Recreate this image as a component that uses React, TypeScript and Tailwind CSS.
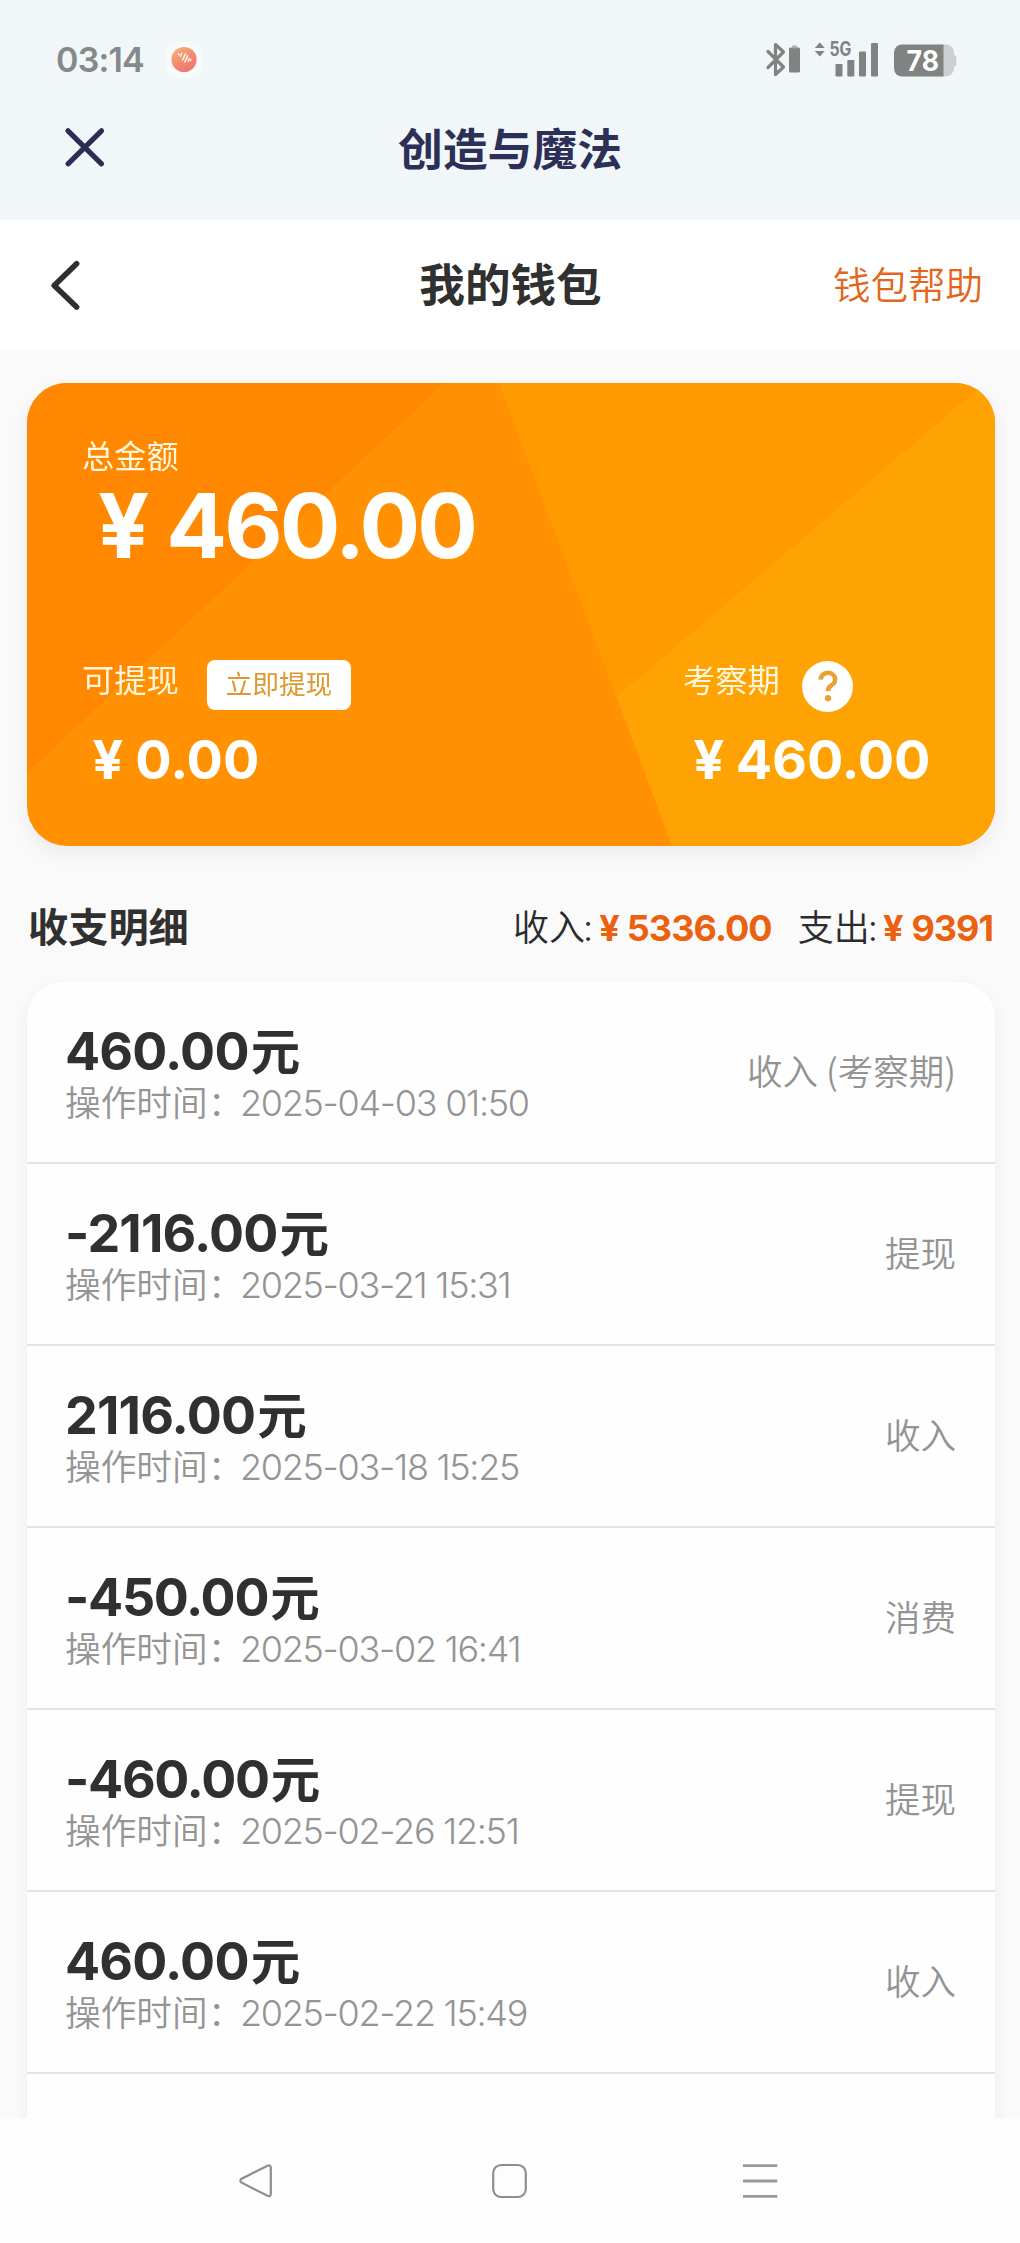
import type { ReactNode } from "react";

type Entry = { amount: string; time: string; kind: string; tight?: boolean };

const entries: Entry[] = [
  { amount: "460.00", time: "2025-04-03 01:50", kind: "收入 (考察期)" },
  { amount: "-2116.00", time: "2025-03-21 15:31", kind: "提现" },
  { amount: "2116.00", time: "2025-03-18 15:25", kind: "收入" },
  { amount: "-450.00", time: "2025-03-02 16:41", kind: "消费", tight: true },
  { amount: "-460.00", time: "2025-02-26 12:51", kind: "提现", tight: true },
  { amount: "460.00", time: "2025-02-22 15:49", kind: "收入" },
];

function Cjk({ className = "", children }: { className?: string; children: ReactNode }) {
  return (
    <span className={`block leading-none whitespace-nowrap font-['Noto_Sans_CJK_SC',sans-serif] ${className}`}>
      {children}
    </span>
  );
}

function StatusBar() {
  return (
    <div className="flex h-[100px] items-start pl-14 pr-[62px]">
      <span className="mt-[42.5px] text-[34px] leading-none font-semibold tracking-[-0.8px] text-[#858989]">03:14</span>
      <svg className="mt-[42px] ml-[22px] shrink-0" width="36" height="36" viewBox="0 0 36 36">
        <defs>
          <linearGradient id="orb" x1="0.1" y1="0.1" x2="0.7" y2="1">
            <stop offset="0" stopColor="#eeb47c" />
            <stop offset="0.5" stopColor="#f28c6c" />
            <stop offset="1" stopColor="#f27474" />
          </linearGradient>
        </defs>
        <rect width="36" height="36" rx="8" fill="#f7fafb" />
        <circle cx="18" cy="17.5" r="12.6" fill="url(#orb)" />
        <g stroke="#fff3e8" strokeLinecap="round">
          <path d="M12.4 11.8l.8 1.4M15.6 11.2l-1 3.2M24.8 17.4l-.4 1.2" strokeWidth="1.5" />
          <path d="M19.4 12l-2.8 6M21.6 13.8l-2.8 6.2M23.2 16.6l-1 2.6" strokeWidth="1.6" />
        </g>
      </svg>
      <svg className="mt-9 ml-auto shrink-0" width="194" height="48" viewBox="764 36 194 48" fill="#7f8382">
        <path d="M768 51.5L783.5 67L775.5 74.5V44.5L783.5 52L768 67.5" fill="none" stroke="#7f8382" strokeWidth="3.2" strokeLinejoin="round" strokeLinecap="round" />
        <rect x="789" y="47.5" width="11" height="25" rx="1.5" />
        <rect x="792" y="45.5" width="5" height="3" rx="1" fill="#a9adad" />
        <path d="M819.8 42.5l5 5.5h-10zM819.8 56.5l5-5.5h-10z" />
        <text x="829.5" y="56.3" fontSize="19.5" fontWeight="700" textLength="22" lengthAdjust="spacingAndGlyphs" fontFamily="Inter, sans-serif">5G</text>
        <rect x="835.5" y="64" width="7" height="12.5" rx="1" />
        <rect x="847.3" y="60" width="7" height="16.5" rx="1" />
        <rect x="859" y="51.5" width="7" height="25" rx="1" />
        <rect x="871" y="43" width="7" height="33.5" rx="1" />
        <path d="M943 44.5h3a8 8 0 0 1 8 8v2.8h.8a1.5 1.5 0 0 1 1.5 1.5v8a1.5 1.5 0 0 1-1.5 1.5h-.8v2a8 8 0 0 1-8 8h-3z" fill="#cccfd1" />
        <path d="M902 44.5h41.5v32H902a8 8 0 0 1-8-8v-16a8 8 0 0 1 8-8z" />
        <text x="906.5" y="71.3" fontSize="28.5" fontWeight="700" textLength="32.5" lengthAdjust="spacingAndGlyphs" fontFamily="Inter, sans-serif" fill="#ffffff">78</text>
      </svg>
    </div>
  );
}

function Header() {
  return (
    <header className="h-[220px] bg-[#f1f6f9]">
      <StatusBar />
      <div className="grid grid-cols-3 items-start">
        <svg className="mt-[26px] ml-[62px]" width="45" height="42" viewBox="0 0 45 42">
          <path d="M6 4.8l33.5 33M39.5 4.8L6 37.8" stroke="#2c2d54" strokeWidth="5.2" strokeLinecap="round" />
        </svg>
        <Cjk className="mt-[25px] text-center text-[44.8px] font-bold text-[#2c2f56]">创造与魔法</Cjk>
      </div>
    </header>
  );
}

function TitleBar() {
  return (
    <div className="grid h-[131px] grid-cols-3 items-start bg-white">
      <svg className="mt-[38px] ml-[46px]" width="40" height="56" viewBox="46 258 40 56">
        <path d="M76.6 263.8L54.2 285.5L76.6 307" fill="none" stroke="#2f2f2f" strokeWidth="5.6" strokeLinecap="round" strokeLinejoin="round" />
      </svg>
      <Cjk className="mt-10 ml-[1px] text-center text-[45.6px] font-bold text-[#303030]">我的钱包</Cjk>
      <Cjk className="mt-[44px] mr-[37px] text-right text-[37.5px] font-[350] text-[#e2661c]">钱包帮助</Cjk>
    </div>
  );
}

function BalanceCard() {
  return (
    <section className="relative ml-[27px] mt-8 h-[463px] w-[968px] overflow-hidden rounded-[40px] bg-[#ff9102]">
      <svg className="absolute inset-0" width="968" height="463" viewBox="-1 0 968 463">
        <path d="M-1 0H416L-1 390Z" fill="#ff8800" />
        <path d="M471 0H967V463H644Z" fill="#ff9b00" />
        <path d="M589 314L957 0H967V463H644Z" fill="#ffa304" />
      </svg>
      <div className="relative pt-[54.5px] pl-[55px]">
        <Cjk className="text-[32.3px] text-[#fff6dc]">总金额</Cjk>
        <div className="mt-[11.5px] ml-4 flex gap-[17px] text-[90px] leading-none font-bold text-white">
          <span>¥</span>
          <span className="tracking-[-2.9px]">460.00</span>
        </div>
        <div className="mt-[89px] flex">
          <div className="w-[601px]">
            <div className="flex h-[50px] items-start">
              <Cjk className="mt-[2px] text-[32.3px] text-[#fff6dc]">可提现</Cjk>
              <button className="ml-7 flex h-[50px] w-36 items-center justify-center rounded-lg bg-white pb-1">
                <Cjk className="text-[26.7px] text-[#dd9831]">立即提现</Cjk>
              </button>
            </div>
            <div className="mt-[23px] ml-[10.5px] flex gap-3 text-[54px] leading-none font-bold text-white">
              <span>¥</span>
              <span>0.00</span>
            </div>
          </div>
          <div>
            <div className="flex h-[50px] items-start">
              <Cjk className="mt-[2px] text-[32.3px] text-[#fff6dc]">考察期</Cjk>
              <svg className="mt-[0.5px] ml-[22px]" width="51" height="51" viewBox="0 0 51 51">
                <circle cx="25.5" cy="25.5" r="25.5" fill="#fff" />
                <path d="M18.8 18.6a7.2 6.6 0 1 1 10.6 5.6c-2.4 1.4-3.4 2.6-3.4 6" fill="none" stroke="#e9a035" strokeWidth="4.6" />
                <circle cx="26" cy="37.2" r="3.1" fill="#e9a035" />
              </svg>
            </div>
            <div className="mt-[23px] ml-[10.5px] flex gap-[11.5px] text-[54px] leading-none font-bold text-white">
              <span>¥</span>
              <span className="tracking-[-0.2px]">460.00</span>
            </div>
          </div>
        </div>
      </div>
    </section>
  );
}

function Summary() {
  return (
    <div className="flex h-[136px] items-start pr-[27px] pl-7">
      <Cjk className="mt-[59px] text-[40.2px] font-bold text-[#303030]">收支明细</Cjk>
      <div className="mt-[61px] ml-auto flex items-baseline text-[36px] leading-none text-[#2b2b2b]">
        <Cjk className="font-[350]">收入</Cjk>
        <span className="ml-[-2px] font-light">:</span>
        <span className="ml-[6px] font-bold text-[#eb610f]">¥</span>
        <span className="ml-[7px] font-bold tracking-[-0.9px] text-[#eb610f]">5336.00</span>
        <Cjk className="ml-[26px] font-[350]">支出</Cjk>
        <span className="ml-[-2px] font-light">:</span>
        <span className="ml-[5px] font-bold text-[#eb610f]">¥</span>
        <span className="ml-[8px] font-bold tracking-[-1px] text-[#eb610f]">9391</span>
      </div>
    </div>
  );
}

function Row({ amount, time, kind, tight }: Entry) {
  return (
    <li className="flex h-[182px] shrink-0 items-start justify-between border-b-2 border-[#e4e4e4] pt-[42px] pr-[39px] pl-[38px]">
      <div>
        <div className="flex items-baseline text-[52px] leading-none font-bold text-[#303030]">
          <span className={tight ? "tracking-[-1.3px]" : "tracking-[-0.8px]"}>{amount}</span>
          <Cjk className="ml-[2px] text-[49.5px]">元</Cjk>
        </div>
        <div className="mt-[4.5px] flex items-baseline text-[36px] leading-none font-[350] text-[#949494]">
          <Cjk className="w-[175px] text-[35.7px] font-[350]">操作时间：</Cjk>
          <span className="tracking-[-1.3px] whitespace-nowrap">{time}</span>
        </div>
      </div>
      <Cjk className="mt-[28px] text-[35.5px] font-[350] text-[#939393]">{kind}</Cjk>
    </li>
  );
}

function NavBar() {
  return (
    <nav className="h-[125px] bg-[#fdfdfd]">
      <svg width="1020" height="125" viewBox="0 2118 1020 125" fill="none" stroke="#8e8e8e" strokeWidth="2.2">
        <path d="M267.5 2165.8L241.2 2179Q239.4 2180.7 241.2 2182.4L267.5 2195.8Q270.6 2197 270.8 2194V2167.6Q270.6 2164.6 267.5 2165.8Z" />
        <rect x="493.2" y="2165" width="32.6" height="32" rx="8" />
        <path d="M743 2165.6H777.3M743 2181H777.3M743 2196.4H777.3" strokeWidth="2.8" stroke="#9a9a9a" />
      </svg>
    </nav>
  );
}

export default function App() {
  return (
    <div className="flex h-[2243px] w-[1020px] flex-col overflow-hidden bg-[#fafafa] font-['Inter','Noto_Sans_CJK_SC',sans-serif]">
      <Header />
      <main className="h-[1898px] overflow-hidden">
        <TitleBar />
        <div className="[filter:drop-shadow(0_8px_10px_rgba(0,0,0,0.06))]">
          <BalanceCard />
        </div>
        <Summary />
        <ul className="ml-[27px] h-[1300px] w-[968px] overflow-hidden rounded-t-[36px] bg-[#fefefe] shadow-[0_6px_18px_rgba(0,0,0,0.06)]">
          {entries.map((entry) => (
            <Row key={entry.time} {...entry} />
          ))}
        </ul>
      </main>
      <NavBar />
    </div>
  );
}
